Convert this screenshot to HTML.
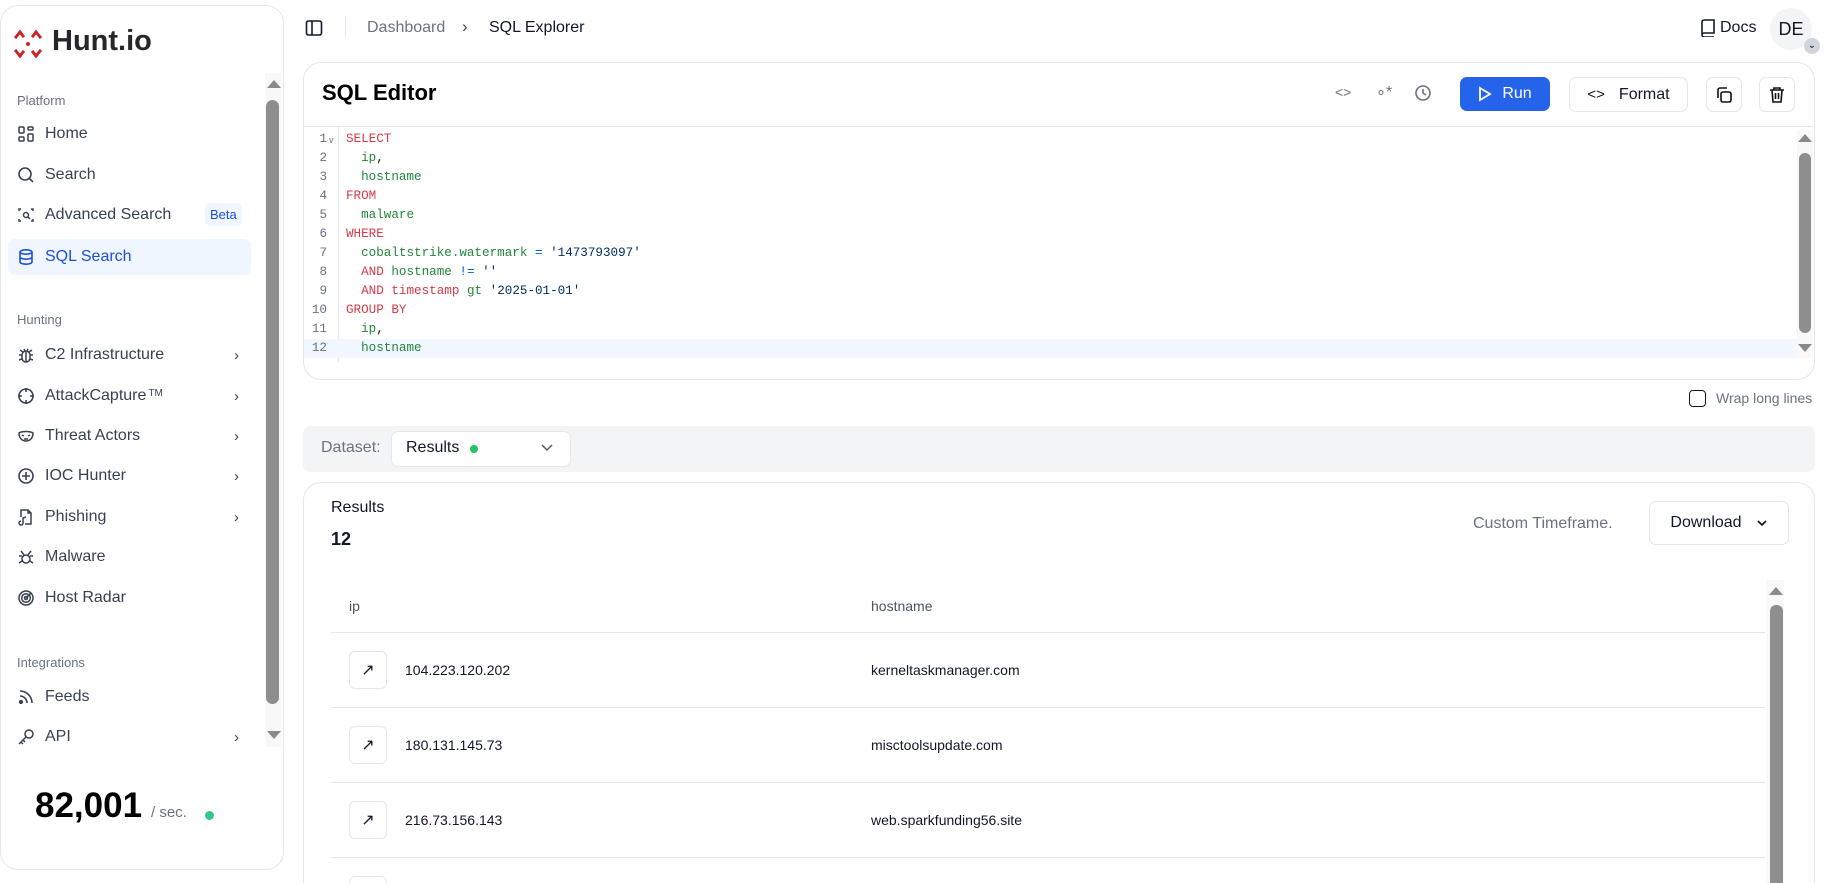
<!DOCTYPE html>
<html style="overflow:hidden;height:883px"><head><meta charset="utf-8"><style>
*{box-sizing:border-box;margin:0;padding:0}
body{width:1826px;height:883px;overflow:hidden;background:#fff;font-family:"Liberation Sans",sans-serif;color:#111827;position:relative}
#w{position:absolute;left:0;top:0;width:1826px;height:883px;overflow:hidden}
.abs{position:absolute}
.side{left:0;top:5px;width:284px;height:865px;border:1px solid #e5e7eb;border-radius:18px;background:#fff}
.lbl{position:absolute;left:17px;font-size:13px;color:#6b7280}
.it{position:absolute;left:17px;width:234px;height:36px;display:flex;align-items:center;font-size:16px;color:#374151}
.it svg{width:18px;height:18px;margin-right:10px;flex:none}
.it .ch{position:absolute;right:12px;font-size:15px;color:#374151}
.code{position:absolute;left:346px;font-family:"Liberation Mono",monospace;font-size:12.6px;white-space:pre;line-height:19px}
.ln{position:absolute;left:303px;width:30px;text-align:right;font-family:"Liberation Mono",monospace;font-size:12.6px;color:#6b7280;line-height:19px}
.k{color:#d73a49}.g{color:#22863a}.s{color:#032f62}.o{color:#005cc5}
.btn{position:absolute;border:1px solid #e5e7eb;border-radius:7px;background:#fff;display:flex;align-items:center;justify-content:center}
.row{position:absolute;left:331px;width:1435px;height:75px;border-bottom:1px solid #e5e7eb}
.row .a{position:absolute;left:18px;top:18px;width:38px;height:38px;border:1px solid #e5e7eb;border-radius:6px;display:flex;align-items:center;justify-content:center}
.row .ip{position:absolute;left:74px;top:29px;font-size:14px;color:#111827}
.row .hn{position:absolute;left:540px;top:29px;font-size:14px;color:#111827}
</style></head><body><div id="w">

<div class="abs side"></div>
<svg class="abs" style="left:12px;top:28px" width="32" height="32" viewBox="0 0 32 32" fill="none" stroke="#c62828" stroke-width="3" stroke-linecap="square"><path d="M4 9 L8 4 L11 8 M21 8 L24 4 L28 9 M4 23 L8 28 L11 24 M21 24 L24 28 L28 23"/><circle cx="16" cy="16" r="2" fill="#c62828" stroke="none"/></svg>
<div class="abs" style="left:52px;top:25px;font-size:29px;font-weight:bold;color:#27272a">Hunt.io</div>

<div class="abs" style="left:265px;top:73px;width:16px;height:674px;background:#f8f8f8"></div>
<div class="abs" style="left:267px;top:80px;width:0;height:0;border-left:7px solid transparent;border-right:7px solid transparent;border-bottom:8px solid #8a8a8a"></div>
<div class="abs" style="left:266px;top:100px;width:13px;height:604px;background:#8e8e8e;border-radius:7px"></div>
<div class="abs" style="left:267px;top:731px;width:0;height:0;border-left:7px solid transparent;border-right:7px solid transparent;border-top:8px solid #8a8a8a"></div>

<div class="lbl" style="top:93px">Platform</div>
<div class="it" style="top:116px"><svg viewBox="0 0 18 18" fill="none" stroke="#374151" stroke-width="1.5"><rect x="2" y="2" width="5" height="6" rx="1"/><rect x="11" y="2" width="5" height="3" rx="1"/><rect x="11" y="9" width="5" height="7" rx="1"/><rect x="2" y="12" width="5" height="4" rx="1"/></svg>Home</div>
<div class="it" style="top:157px"><svg viewBox="0 0 18 18" fill="none" stroke="#374151" stroke-width="1.6"><circle cx="8" cy="8" r="6"/><path d="M12.5 12.5 L16 16"/></svg>Search</div>
<div class="it" style="top:197px"><svg viewBox="0 0 18 18" fill="none" stroke="#374151" stroke-width="1.5"><path d="M2 5V3h2M14 3h2v2M16 13v2h-2M4 15H2v-2"/><circle cx="9" cy="9" r="2.5"/><path d="M11 11l2 2"/></svg>Advanced Search<span style="position:absolute;left:188px;top:6px;background:#eff6ff;color:#1d4ed8;font-size:13px;padding:4px 5px;border-radius:5px">Beta</span></div>
<div class="abs" style="left:8px;top:239px;width:243px;height:36px;background:#eff6ff;border-radius:7px"></div>
<div class="it" style="top:239px;color:#1d4ed8"><svg viewBox="0 0 18 18" fill="none" stroke="#1d4ed8" stroke-width="1.6"><ellipse cx="9" cy="4" rx="6" ry="2.2"/><path d="M3 4v10c0 1.2 2.7 2.2 6 2.2s6-1 6-2.2V4M3 9c0 1.2 2.7 2.2 6 2.2s6-1 6-2.2"/></svg>SQL Search</div>

<div class="lbl" style="top:312px">Hunting</div>
<div class="it" style="top:337px"><svg viewBox="0 0 18 18" fill="none" stroke="#374151" stroke-width="1.5"><rect x="5" y="5" width="8" height="11" rx="4"/><path d="M9 6v10M2 9h3M13 9h3M2 14l3-1M16 14l-3-1M3 4l3 2M15 4l-3 2M7 3l1 2M11 3l-1 2"/></svg>C2 Infrastructure<span class="ch">›</span></div>
<div class="it" style="top:378px"><svg viewBox="0 0 18 18" fill="none" stroke="#374151" stroke-width="1.6"><circle cx="9" cy="9" r="7"/><path d="M9 1v4M9 13v4M1 9h4M13 9h4"/></svg>AttackCapture<sup style="font-size:10px;position:relative;top:-3px;margin-left:2px">TM</sup><span class="ch">›</span></div>
<div class="it" style="top:418px"><svg viewBox="0 0 18 18" fill="none" stroke="#374151" stroke-width="1.5"><path d="M2 6c3-2 11-2 14 0 0 5-3 8-7 8S2 11 2 6z"/><path d="M5 8l2 1M13 8l-2 1M7 12h4"/></svg>Threat Actors<span class="ch">›</span></div>
<div class="it" style="top:458px"><svg viewBox="0 0 18 18" fill="none" stroke="#374151" stroke-width="1.6"><circle cx="9" cy="9" r="7"/><path d="M9 5v8M5 9h8"/></svg>IOC Hunter<span class="ch">›</span></div>
<div class="it" style="top:499px"><svg viewBox="0 0 18 18" fill="none" stroke="#374151" stroke-width="1.5"><path d="M4 9V2h7l3 3v11H8M11 2v3h3"/><path d="M4 13a2 2 0 1 0 2 2V10l3-1"/></svg>Phishing<span class="ch">›</span></div>
<div class="it" style="top:539px"><svg viewBox="0 0 18 18" fill="none" stroke="#374151" stroke-width="1.5"><circle cx="9" cy="11" r="4"/><path d="M2 8h3M13 8h3M2 15l3-2M16 15l-3-2M4 3l3 4M14 3l-3 4"/></svg>Malware</div>
<div class="it" style="top:580px"><svg viewBox="0 0 18 18" fill="none" stroke="#374151" stroke-width="1.5"><circle cx="9" cy="9" r="7"/><circle cx="9" cy="9" r="4.3"/><circle cx="9" cy="9" r="1.5"/><path d="M9 9l5-5"/></svg>Host Radar</div>

<div class="lbl" style="top:655px">Integrations</div>
<div class="it" style="top:679px"><svg viewBox="0 0 18 18" fill="none" stroke="#374151" stroke-width="1.6"><path d="M3 3a12 12 0 0 1 12 12M3 8a7 7 0 0 1 7 7"/><circle cx="4" cy="14" r="1.3" fill="#374151"/></svg>Feeds</div>
<div class="it" style="top:719px"><svg viewBox="0 0 18 18" fill="none" stroke="#374151" stroke-width="1.5"><circle cx="12" cy="6" r="4"/><path d="M9 9L2 16M4 14l2 2M6 12l2 2"/></svg>API<span class="ch">›</span></div>

<div class="abs" style="left:35px;top:786px;font-size:35px;font-weight:600;color:#000">82,001</div>
<div class="abs" style="left:151px;top:804px;font-size:15px;color:#6b7280">/ sec.</div>
<div class="abs" style="left:205px;top:811px;width:9px;height:9px;border-radius:50%;background:#34c78a"></div>

<svg class="abs" style="left:305px;top:19px" width="18" height="18" viewBox="0 0 18 18" fill="none" stroke="#111827" stroke-width="1.6"><rect x="1.5" y="2" width="15" height="14" rx="2"/><path d="M7 2v14"/></svg>
<div class="abs" style="left:345px;top:17px;width:1px;height:20px;background:#e5e7eb"></div>
<div class="abs" style="left:367px;top:19px;font-size:16px;color:#6b7280">Dashboard</div>
<div class="abs" style="left:462px;top:17px;font-size:17px;color:#374151">›</div>
<div class="abs" style="left:489px;top:19px;font-size:16px;color:#111827">SQL Explorer</div>
<svg class="abs" style="left:1700px;top:19px" width="16" height="18" viewBox="0 0 16 18" fill="none" stroke="#111827" stroke-width="1.6"><path d="M2 15V3a2 2 0 0 1 2-2h10v13H4a2 2 0 0 0 0 4h10"/></svg>
<div class="abs" style="left:1720px;top:19px;font-size:16px">Docs</div>
<div class="abs" style="left:1770px;top:8px;width:42px;height:42px;border-radius:50%;background:#f3f4f6;text-align:center;line-height:42px;font-size:18px">DE</div>
<div class="abs" style="left:1804px;top:38px;width:16px;height:16px;border-radius:50%;background:#d1d5db;text-align:center;font-size:10px;line-height:15px">⌄</div>

<div class="abs" style="left:303px;top:62px;width:1512px;height:318px;border:1px solid #e5e7eb;border-radius:18px"></div>
<div class="abs" style="left:322px;top:80px;font-size:22px;font-weight:bold;color:#000">SQL Editor</div>
<div class="abs" style="left:304px;top:126px;width:1510px;height:1px;background:#e5e7eb"></div>
<div class="abs" style="left:1335px;top:84px;font-size:14px;color:#6b7280">&lt;&gt;</div>
<div class="abs" style="left:1376px;top:82px;font-size:16px;color:#6b7280">∘*</div>
<svg class="abs" style="left:1414px;top:84px" width="18" height="18" viewBox="0 0 18 18" fill="none" stroke="#6b7280" stroke-width="1.6"><circle cx="9" cy="9" r="7"/><path d="M9 5v4l3 2"/></svg>
<div class="abs" style="left:1460px;top:77px;width:90px;height:34px;background:#2563eb;border-radius:7px;color:#fff;font-size:16px;display:flex;align-items:center;justify-content:center;gap:10px"><svg width="14" height="16" viewBox="0 0 14 16" fill="none" stroke="#fff" stroke-width="1.8"><path d="M2 2l10 6-10 6z"/></svg>Run</div>
<div class="btn" style="left:1569px;top:77px;width:119px;height:35px;font-size:16px;gap:14px"><span style="font-size:15px">&lt;&gt;</span>Format</div>
<div class="btn" style="left:1706px;top:77px;width:36px;height:35px"><svg width="18" height="18" viewBox="0 0 18 18" fill="none" stroke="#111" stroke-width="1.6"><rect x="6" y="6" width="10" height="10" rx="2"/><path d="M3 12V4a2 2 0 0 1 2-2h7"/></svg></div>
<div class="btn" style="left:1759px;top:77px;width:36px;height:35px"><svg width="16" height="18" viewBox="0 0 16 18" fill="none" stroke="#111" stroke-width="1.6"><path d="M1 4h14M5 4V2h6v2M3 4l1 12h8l1-12M6.5 7v6M9.5 7v6"/></svg></div>

<div class="abs" style="left:338px;top:127px;width:1px;height:235px;background:#e5e7eb"></div>
<div class="abs" style="left:304px;top:339px;width:1493px;height:19px;background:#f0f7ff"></div>
<div class="ln" style="top:130px;width:24px">1<br>2<br>3<br>4<br>5<br>6<br>7<br>8<br>9<br>10<br>11<br>12</div>
<div class="abs" style="left:329px;top:135px;font-size:9px;color:#6b7280">v</div>
<div class="code" style="top:130px"><span class="k">SELECT</span>
  <span class="g">ip</span>,
  <span class="g">hostname</span>
<span class="k">FROM</span>
  <span class="g">malware</span>
<span class="k">WHERE</span>
  <span class="g">cobaltstrike.watermark</span> <span class="o">=</span> <span class="s">'1473793097'</span>
  <span class="k">AND</span> <span class="g">hostname</span> <span class="o">!=</span> <span class="s">''</span>
  <span class="k">AND</span> <span class="k">timestamp</span> <span class="g">gt</span> <span class="s">'2025-01-01'</span>
<span class="k">GROUP BY</span>
  <span class="g">ip</span>,
  <span class="g">hostname</span></div>
<div class="abs" style="left:1797px;top:130px;width:16px;height:228px;background:#f8f8f8"></div>
<div class="abs" style="left:1798px;top:134px;border-left:7px solid transparent;border-right:7px solid transparent;border-bottom:8px solid #8a8a8a"></div>
<div class="abs" style="left:1799px;top:153px;width:12px;height:180px;background:#8e8e8e;border-radius:6px"></div>
<div class="abs" style="left:1798px;top:344px;border-left:7px solid transparent;border-right:7px solid transparent;border-top:8px solid #8a8a8a"></div>

<div class="abs" style="left:1689px;top:390px;width:17px;height:17px;border:1.5px solid #111827;border-radius:4px"></div>
<div class="abs" style="left:1716px;top:390px;font-size:14px;color:#6b7280">Wrap long lines</div>

<div class="abs" style="left:303px;top:426px;width:1512px;height:46px;background:#f3f4f6;border-radius:8px"></div>
<div class="abs" style="left:321px;top:439px;font-size:16px;color:#6b7280">Dataset:</div>
<div class="abs" style="left:391px;top:431px;width:180px;height:36px;background:#fff;border:1px solid #e5e7eb;border-radius:7px"></div>
<div class="abs" style="left:406px;top:439px;font-size:16px">Results</div>
<div class="abs" style="left:470px;top:445px;width:8px;height:8px;border-radius:50%;background:#22c55e"></div>
<svg class="abs" style="left:540px;top:443px" width="14" height="10" viewBox="0 0 14 10" fill="none" stroke="#4b5563" stroke-width="1.4"><path d="M2 2l5 5 5-5"/></svg>

<div class="abs" style="left:303px;top:482px;width:1512px;height:440px;border:1px solid #e5e7eb;border-radius:18px"></div>
<div class="abs" style="left:331px;top:499px;font-size:16px">Results</div>
<div class="abs" style="left:331px;top:529px;font-size:18px;font-weight:bold">12</div>
<div class="abs" style="left:1473px;top:515px;font-size:16px;color:#6b7280">Custom Timeframe.</div>
<div class="btn" style="left:1649px;top:501px;width:140px;height:44px;font-size:16px;gap:14px">Download<svg width="12" height="8" viewBox="0 0 12 8" fill="none" stroke="#111" stroke-width="1.6"><path d="M2 2l4 4 4-4"/></svg></div>

<div class="abs" style="left:349px;top:598px;font-size:14px;color:#4b5563">ip</div>
<div class="abs" style="left:871px;top:598px;font-size:14px;color:#4b5563">hostname</div>
<div class="abs" style="left:331px;top:632px;width:1435px;height:1px;background:#e5e7eb"></div>
<div class="row" style="top:633px"><div class="a">↗</div><div class="ip">104.223.120.202</div><div class="hn">kerneltaskmanager.com</div></div>
<div class="row" style="top:708px"><div class="a">↗</div><div class="ip">180.131.145.73</div><div class="hn">misctoolsupdate.com</div></div>
<div class="row" style="top:783px"><div class="a">↗</div><div class="ip">216.73.156.143</div><div class="hn">web.sparkfunding56.site</div></div>
<div class="row" style="top:858px;border-bottom:none;height:25px;overflow:hidden"><div class="a">↗</div></div>

<div class="abs" style="left:1767px;top:580px;width:17px;height:303px;background:#f8f8f8"></div>
<div class="abs" style="left:1769px;top:587px;border-left:7px solid transparent;border-right:7px solid transparent;border-bottom:8px solid #8a8a8a"></div>
<div class="abs" style="left:1770px;top:605px;width:13px;height:278px;background:#8e8e8e;border-radius:6px 6px 0 0"></div>
</div></body></html>
